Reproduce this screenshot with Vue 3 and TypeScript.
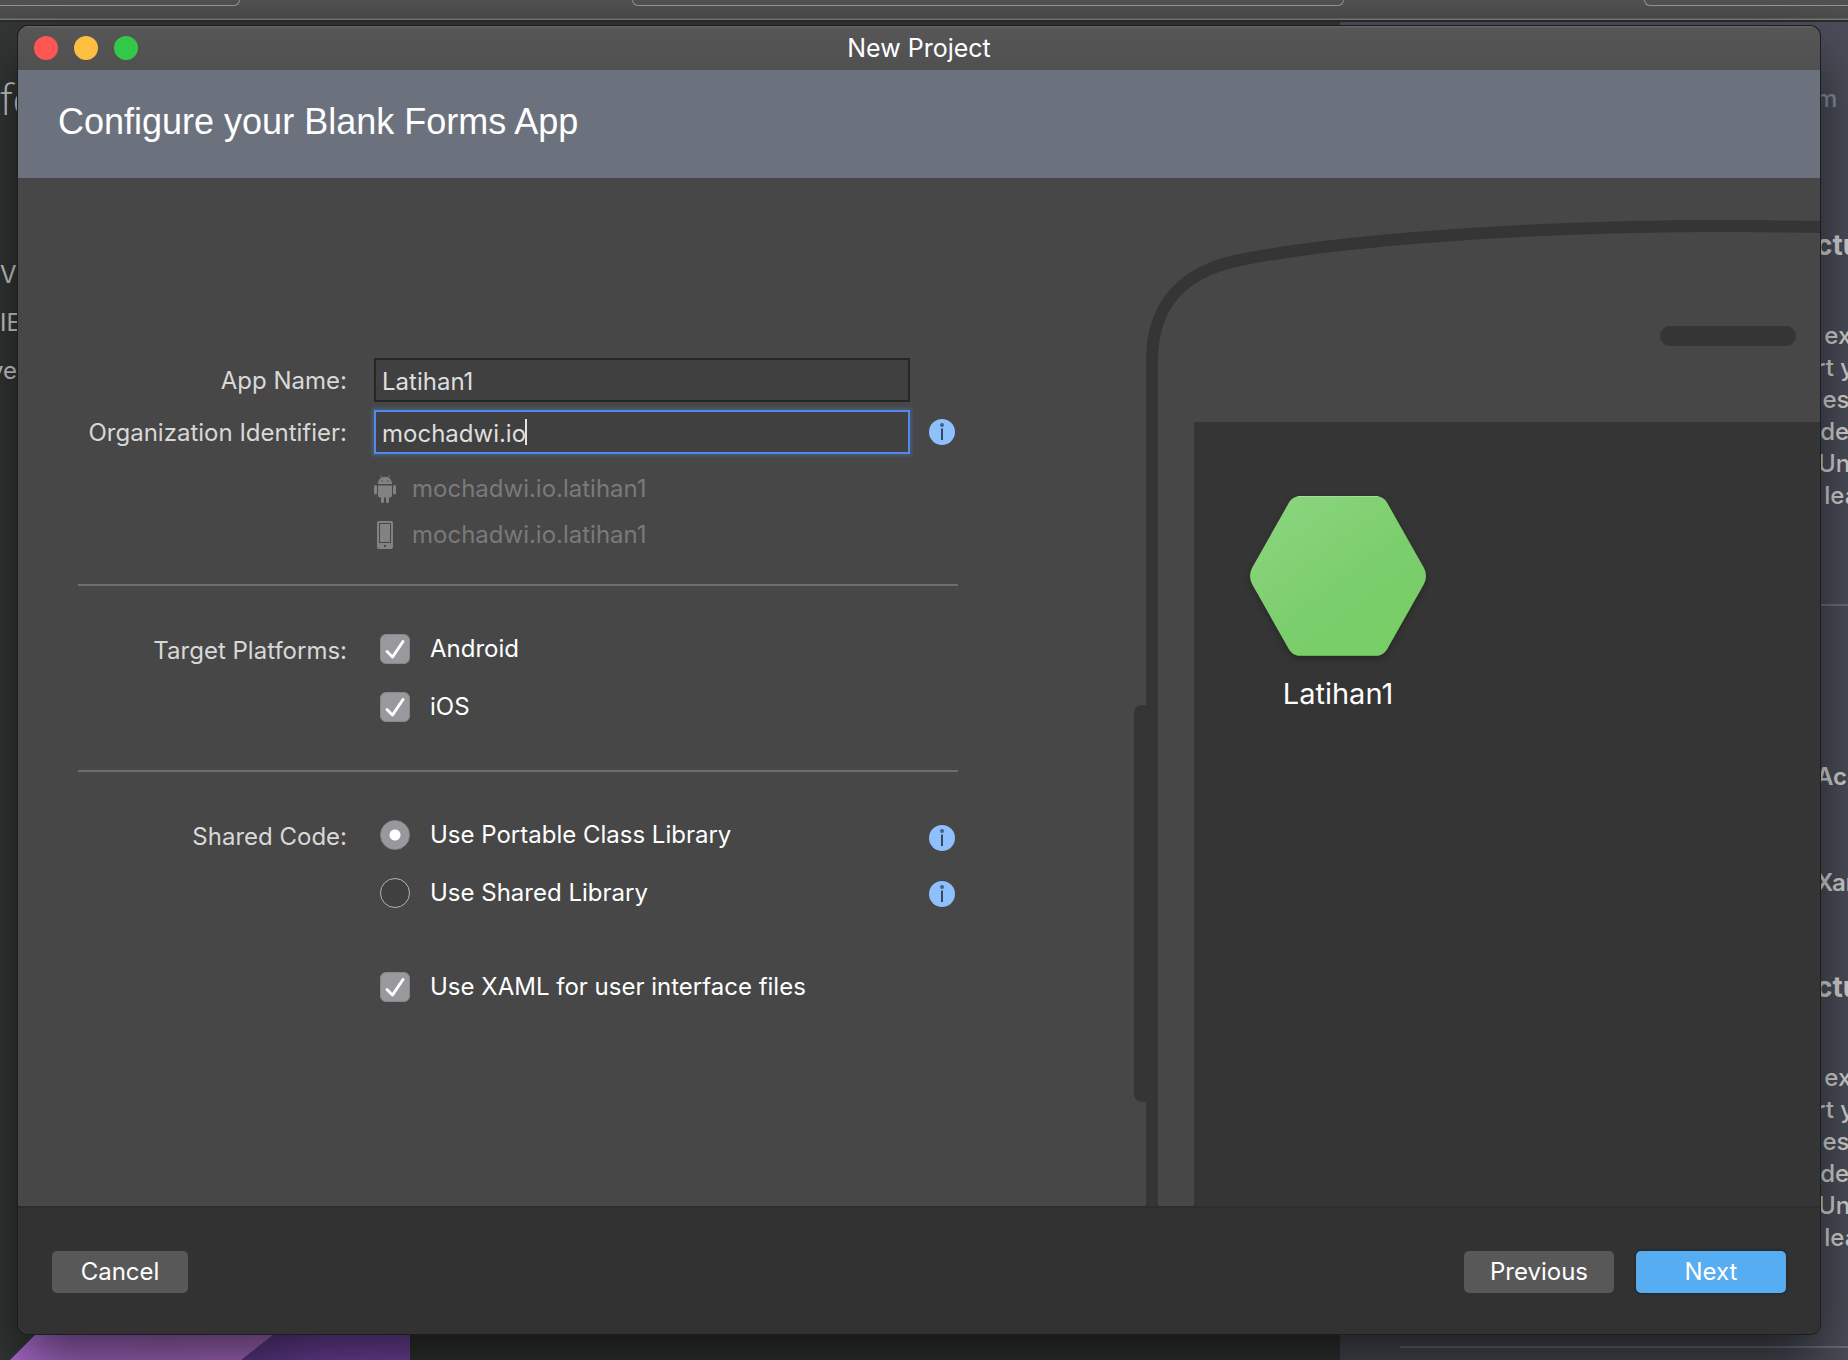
<script setup lang="ts">
import { computed, ref } from 'vue'

interface Platform {
  id: string
  label: string
  enabled: boolean
}

interface SharedCodeOption {
  id: string
  label: string
}

const appName = ref('Latihan1')
const organization = ref('mochadwi.io')
const bundleId = computed(() => `${organization.value}.${appName.value.toLowerCase()}`)

const platforms = ref<Platform[]>([
  { id: 'android', label: 'Android', enabled: true },
  { id: 'ios', label: 'iOS', enabled: true },
])

const sharedCodeOptions: SharedCodeOption[] = [
  { id: 'pcl', label: 'Use Portable Class Library' },
  { id: 'shared', label: 'Use Shared Library' },
]
const sharedCode = ref('pcl')
const useXaml = ref(true)

const articleLines = ['\u2009\u2009ex', 'rt y', ' es', '\u2009de', '\u200aUn', '\u2009\u2009lea']
</script>

<template>
  <div class="desktop">
    <div class="backdrop" aria-hidden="true">
      <div class="toolbar">
        <span class="toolbar-field first"></span>
        <span class="toolbar-field middle"></span>
        <span class="toolbar-field last"></span>
      </div>
      <div class="welcome">
        <div class="recent">
          <p class="recent-title">fo</p>
          <p class="recent-item">V</p>
          <p class="recent-item">IE</p>
          <p class="recent-item cut">ve</p>
          <svg class="artwork" width="410" height="30" viewBox="0 0 410 30">
            <defs>
              <linearGradient id="facet" x1="0" x2="1">
                <stop offset="0" stop-color="#b070d8" />
                <stop offset="0.4" stop-color="#b070d0" />
                <stop offset="1" stop-color="#bb78da" />
              </linearGradient>
              <linearGradient id="facet-dark" x1="0" x2="1">
                <stop offset="0" stop-color="#613c90" />
                <stop offset="0.5" stop-color="#7848ac" />
                <stop offset="1" stop-color="#7c4aae" />
              </linearGradient>
            </defs>
            <path d="M10 30 40 0H410V30Z" fill="url(#facet)" />
            <path d="M241 30 279 0H410V30Z" fill="url(#facet-dark)" />
          </svg>
        </div>
        <div class="news">
          <div class="news-text">
            <p class="news-link">m</p>
            <p class="news-title">ctu</p>
            <div class="article">
              <p v-for="line in articleLines" :key="line">{{ line }}</p>
            </div>
            <hr class="news-rule" />
            <p class="news-heading">Acc</p>
            <p class="news-heading second">Xan</p>
            <p class="news-title second">ctu</p>
            <div class="article">
              <p v-for="line in articleLines" :key="line">{{ line }}</p>
            </div>
          </div>
          <hr class="news-rule wide" />
        </div>
      </div>
    </div>

    <main class="window">
      <header class="titlebar">
        <div class="lights">
          <button type="button" class="light close" aria-label="Close"></button>
          <button type="button" class="light minimize" aria-label="Minimize"></button>
          <button type="button" class="light zoom" aria-label="Zoom"></button>
        </div>
        <span class="title">New Project</span>
      </header>

      <div class="banner">
        <h1>Configure your Blank Forms App</h1>
      </div>

      <div class="body">
        <form id="project-form" class="form" @submit.prevent>
          <section class="group names">
            <label class="caption" for="app-name">App Name:</label>
            <input id="app-name" v-model="appName" class="field" type="text" />
            <span></span>

            <label class="caption" for="organization">Organization Identifier:</label>
            <div class="focused">
              <input id="organization" v-model="organization" class="field" type="text" />
              <span class="caret"></span>
            </div>
            <button type="button" class="info" aria-label="About the organization identifier">
              <svg width="26" height="26" viewBox="0 0 26 26">
                <circle cx="13" cy="13" r="13" fill="#8dc0fd" />
                <circle cx="13" cy="6" r="2" fill="#41618a" />
                <path d="M13 9.500V21" stroke="#35455a" stroke-width="2" />
              </svg>
            </button>

            <ul class="bundles">
              <li>
                <svg width="22" height="28" viewBox="0 0 22 28" fill="#828282">
                  <path d="M6.500 .5 8.500 3.500M15.500 .5 13.500 3.500" stroke="#828282" stroke-width="1" />
                  <path d="M4 9C4 4.500 7 2 11 2s7 2.500 7 7Z" />
                  <path d="M4 10.500H18V20.500Q18 22.500 16 22.500H6Q4 22.500 4 20.500Z" />
                  <rect x="0" y="10" width="3" height="9.500" rx="1.500" />
                  <rect x="19" y="10" width="3" height="9.500" rx="1.500" />
                  <rect x="7" y="20" width="3" height="8" rx="1.500" />
                  <rect x="12" y="20" width="3" height="8" rx="1.500" />
                  <circle cx="8" cy="6" r=".7" fill="#474747" />
                  <circle cx="14" cy="6" r=".7" fill="#474747" />
                </svg>
                <span>{{ bundleId }}</span>
              </li>
              <li>
                <svg width="22" height="28" viewBox="0 0 22 28">
                  <rect x="3" y="0" width="16" height="28" rx="2" fill="#828282" />
                  <rect x="5.500" y="2.500" width="11" height="19" fill="none" stroke="#474747" />
                  <rect x="10" y="24" width="2" height="2" fill="#474747" />
                </svg>
                <span>{{ bundleId }}</span>
              </li>
            </ul>
          </section>

          <section class="group choices" role="group" aria-labelledby="platforms-caption">
            <span id="platforms-caption" class="caption">Target Platforms:</span>
            <div class="options">
              <label v-for="platform in platforms" :key="platform.id" class="option">
                <span class="mark">
                  <input v-model="platform.enabled" type="checkbox" />
                  <svg v-if="platform.enabled" width="30" height="30" viewBox="0 0 30 30">
                    <path d="M7 17.500 12.500 23 23 7.500" />
                  </svg>
                </span>
                {{ platform.label }}
              </label>
            </div>
          </section>

          <section class="group choices" role="group" aria-labelledby="shared-caption">
            <span id="shared-caption" class="caption">Shared Code:</span>
            <div class="options">
              <label v-for="option in sharedCodeOptions" :key="option.id" class="option">
                <span class="mark">
                  <input v-model="sharedCode" type="radio" name="shared-code" :value="option.id" />
                </span>
                {{ option.label }}
              </label>
              <label class="option xaml">
                <span class="mark">
                  <input v-model="useXaml" type="checkbox" />
                  <svg v-if="useXaml" width="30" height="30" viewBox="0 0 30 30">
                    <path d="M7 17.500 12.500 23 23 7.500" />
                  </svg>
                </span>
                Use XAML for user interface files
              </label>
            </div>
            <div class="hints">
              <button
                v-for="option in sharedCodeOptions"
                :key="option.id"
                type="button"
                class="info"
                :aria-label="`About: ${option.label}`"
              >
                <svg width="26" height="26" viewBox="0 0 26 26">
                  <circle cx="13" cy="13" r="13" fill="#8dc0fd" />
                  <circle cx="13" cy="6" r="2" fill="#41618a" />
                  <path d="M13 9.500V21" stroke="#35455a" stroke-width="2" />
                </svg>
              </button>
            </div>
          </section>
        </form>

        <aside class="preview">
          <svg class="phone" width="100%" height="100%">
            <g fill="#353535">
              <rect x="0" y="527" width="20" height="397" rx="8" />
              <rect x="60" y="244" width="2000" height="3000" />
              <rect x="526" y="148" width="136" height="20" rx="10" />
            </g>
            <path
              d="M18 3000V182C18 126 50 93 106 82C206 62 396 48 592 48C640 48 670 49 700 49"
              fill="none"
              stroke="#353535"
              stroke-width="12"
            />
          </svg>
          <figure class="app">
            <svg class="hexagon" width="176" height="160" viewBox="0 0 176 160">
              <defs>
                <linearGradient id="leaf" x1="0.15" y1="0.1" x2="0.8" y2="0.9">
                  <stop offset="0" stop-color="#89d47c" />
                  <stop offset="0.6" stop-color="#7bce6c" />
                  <stop offset="1" stop-color="#77cd66" />
                </linearGradient>
              </defs>
              <path
                d="M50 0H126Q133 0 137 6.500L174 72Q178 80 174 88L137 153.500Q133 160 126 160H50Q43 160 39 153.500L2 88Q-2 80 2 72L39 6.500Q43 0 50 0Z"
                fill="url(#leaf)"
              />
              <path d="M48 .5H128" stroke="#a2de97" />
              <path d="M48 159.500H128" stroke="#63b054" />
            </svg>
            <figcaption>{{ appName }}</figcaption>
          </figure>
        </aside>
      </div>

      <footer class="footer">
        <button type="button" class="action cancel">Cancel</button>
        <button type="button" class="action">Previous</button>
        <button type="submit" form="project-form" class="action primary">Next</button>
      </footer>
    </main>
  </div>
</template>

<style>
body {
  margin: 0;
  background: #333634;
}
</style>

<style scoped>
* {
  box-sizing: border-box;
}

p,
h1,
ul,
figure {
  margin: 0;
  padding: 0;
}

svg {
  display: block;
}

.desktop {
  position: relative;
  min-height: 100vh;
  overflow: hidden;
  padding: 26px 28px 26px 18px;
  color: #fff;
  font-family: Inter, 'Noto Sans', sans-serif;
  font-size: 24px;
  line-height: 30px;
}

/* Application window behind the dialog */
.backdrop {
  position: absolute;
  inset: 0;
  display: flex;
  flex-direction: column;
}

.toolbar {
  display: grid;
  grid-template-columns: 240fr 392fr 712fr 300fr 204fr;
  height: 22px;
  flex: none;
  background: linear-gradient(#525252, #4b4b4b 18px, #777 19px, #777 20px, #2b2d2c 20px);
}

.toolbar-field {
  height: 6px;
  border: 1px solid #949494;
  border-top: 0;
  border-radius: 0 0 6px 6px;
}

.toolbar-field.first {
  border-left: 0;
  border-bottom-left-radius: 0;
}

.toolbar-field.middle {
  grid-column: 3;
}

.toolbar-field.last {
  grid-column: 5;
  border-right: 0;
  border-bottom-right-radius: 0;
}

.welcome {
  display: flex;
  flex: 1;
}

.recent {
  display: flex;
  flex: 1;
  flex-direction: column;
  background: #333634;
  color: #d0d0d0;
}

.recent-title {
  margin-top: 52px;
  font-family: 'Open Sans', sans-serif;
  font-size: 42px;
  font-weight: 300;
  line-height: 50px;
}

.recent-item {
  margin-top: 18px;
}

.recent-title + .recent-item {
  margin-top: 136px;
}

.recent-item.cut {
  text-indent: -10px;
}

.artwork {
  margin-top: auto;
}

.news {
  display: flex;
  flex: none;
  flex-direction: column;
  width: 508px;
  background: #4b4e59;
  color: #d4d4d4;
  font-weight: 500;
}

.news-text {
  width: 32px;
  margin-left: auto;
  overflow: hidden;
  white-space: pre;
}

.news-link {
  margin-top: 62px;
  color: #858ba0;
}

.news-title {
  margin-top: 116px;
  font-size: 28px;
  font-weight: 700;
}

.article {
  margin-top: 60px;
  line-height: 32px;
}

.news-rule {
  width: 100%;
  height: 2px;
  margin: 92px 0 0;
  border: 0;
  background: #6c6f7a;
}

.news-heading {
  margin-top: 156px;
  font-weight: 600;
}

.news-heading.second {
  margin-top: 76px;
}

.news-title.second {
  margin-top: 74px;
}

.news-rule.wide {
  width: auto;
  margin: auto 0 12px 60px;
}

/* Dialog */
.window {
  position: relative;
  display: flex;
  flex-direction: column;
  min-height: calc(100vh - 52px);
  overflow: hidden;
  border-radius: 10px;
  background: #474747;
  box-shadow: 0 0 0 1px #1c1d1e, 0 30px 60px rgba(0, 0, 0, 0.6);
}

.titlebar {
  position: relative;
  display: flex;
  align-items: center;
  justify-content: center;
  height: 44px;
  background: linear-gradient(#6a6a6a, #565656 2px, #505050);
}

.title {
  font-size: 25px;
  line-height: 32px;
}

.lights {
  position: absolute;
  left: 16px;
  display: flex;
  gap: 16px;
}

.light {
  width: 24px;
  height: 24px;
  padding: 0;
  border: 0;
  border-radius: 50%;
}

.close {
  background: #fe5653;
}

.minimize {
  background: #febe41;
}

.zoom {
  background: #34c84a;
}

.banner {
  height: 108px;
  padding: 30px 40px;
  background: #6b727e;
}

.banner h1 {
  font-family: 'Liberation Sans', Arial, sans-serif;
  font-size: 36px;
  font-weight: 400;
  line-height: 44px;
}

.body {
  display: grid;
  flex: 1;
  grid-template-columns: minmax(940px, 1116fr) 686fr;
}

.form {
  width: 940px;
  padding: 180px 0 80px 60px;
}

.group {
  display: grid;
  grid-template-columns: 296px 536px 48px;
}

.names {
  row-gap: 8px;
  align-items: center;
  padding-bottom: 26px;
}

.caption {
  padding: 2px 27px 0 0;
  color: #d8d8d8;
  text-align: right;
}

.field {
  display: block;
  width: 100%;
  height: 44px;
  padding: 2px 6px 0;
  border: 2px solid #262626;
  border-radius: 0;
  outline: 0;
  background: #404040;
  color: #dedede;
  font: inherit;
}

.focused {
  position: relative;
}

.focused .field {
  border-color: #5288ea;
  box-shadow: 0 0 3px 2px rgba(82, 136, 234, 0.3);
}

.caret {
  position: absolute;
  top: 9px;
  left: 151px;
  width: 2px;
  height: 26px;
  background: #e4e4e4;
}

.info {
  width: 26px;
  height: 26px;
  margin-left: 19px;
  padding: 0;
  border: 0;
  background: none;
}

.bundles {
  grid-column: 2;
  padding-top: 4px;
  color: #7a7a7a;
  list-style: none;
}

.bundles li {
  display: flex;
  align-items: center;
  gap: 16px;
  height: 46px;
}

.choices {
  margin-top: 48px;
}

.names,
.choices:not(:last-child) {
  border-bottom: 2px solid #6e6e6e;
}

.choices:not(:last-child) {
  padding-bottom: 48px;
}

.options {
  display: flex;
  flex-direction: column;
  align-items: flex-start;
  gap: 28px;
  padding-left: 6px;
}

.option {
  display: flex;
  gap: 20px;
}

.option.xaml {
  margin-top: 36px;
}

.mark {
  position: relative;
  width: 30px;
  height: 30px;
}

.mark input {
  display: block;
  width: 30px;
  height: 30px;
  margin: 0;
  border: 1px solid #b4b4b4;
  border-radius: 6px;
  appearance: none;
  background: #404040;
}

.mark input[type='radio'] {
  border-radius: 50%;
}

.mark input:checked {
  border-color: #88878c;
  background: #99989d;
}

.mark input[type='radio']:checked {
  background: radial-gradient(circle, #fff 5px, #99989d 6px);
}

.mark svg {
  position: absolute;
  inset: 0;
  pointer-events: none;
}

.mark path {
  fill: none;
  stroke: #fff;
  stroke-linecap: round;
  stroke-linejoin: round;
  stroke-width: 3;
}

.hints {
  display: flex;
  flex-direction: column;
  gap: 30px;
  padding-top: 5px;
}

.preview {
  position: relative;
  overflow: hidden;
  padding: 318px 0 0 116px;
}

.phone {
  position: absolute;
  inset: 0;
}

.app {
  position: relative;
  width: 176px;
  text-align: center;
}

.hexagon {
  filter: drop-shadow(0 3px 3px rgba(0, 0, 0, 0.25));
}

.app figcaption {
  margin-top: 20px;
  font-size: 29px;
  line-height: 36px;
}

.footer {
  display: flex;
  align-items: center;
  gap: 22px;
  height: 128px;
  padding: 2px 34px 0;
  border-top: 2px solid #2d2d2d;
  background: #323232;
}

.action {
  width: 150px;
  height: 42px;
  padding: 0;
  border: 0;
  border-radius: 5px;
  background: #585858;
  color: #fff;
  font: inherit;
}

.action.cancel {
  width: 136px;
  margin-right: auto;
}

.action.primary {
  background: #57adf1;
  box-shadow: 0 0 2px 1px #262626;
}
</style>
